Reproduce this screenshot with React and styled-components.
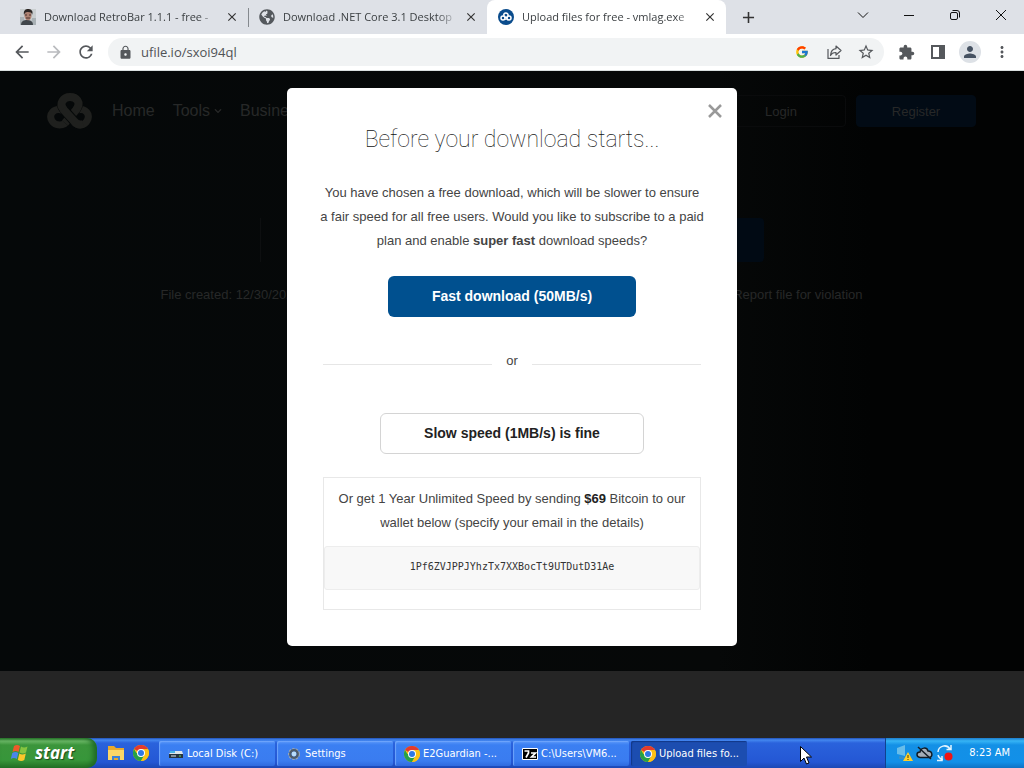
import React from 'react';
import styled, { createGlobalStyle, css } from 'styled-components';
import {
  MdArrowBack, MdArrowForward, MdRefresh, MdLock, MdStarBorder,
  MdExtension, MdPerson, MdMoreVert, MdClose, MdAdd,
} from 'react-icons/md';
import { FcGoogle } from 'react-icons/fc';
import { FaGlobeAmericas, FaChevronDown } from 'react-icons/fa';

const uiFont = '"Open Sans", "Noto Sans", sans-serif';
const pageFont = '"Liberation Sans", Arial, sans-serif';
const taskFont = '"DejaVu Sans Condensed", "DejaVu Sans", sans-serif';

const GlobalStyle = createGlobalStyle`
  *, *::before, *::after { box-sizing: border-box; }
  body { margin: 0; background: #252525; font-family: ${pageFont}; }
  button { border: 0; padding: 0; margin: 0; background: none; font: inherit; color: inherit; }
  p, h1, h2 { margin: 0; }
  svg { display: block; flex: none; }
`;

const Screen = styled.div`
  display: flex;
  flex-direction: column;
  min-height: 100vh;
`;

/* ---------- browser chrome ---------- */

const TabStrip = styled.div`
  display: flex;
  height: 34px;
  padding-left: 9px;
  background: #dee1e7;
  font: 11px/16px ${uiFont};
  color: #3c4043;
`;

const Tab = styled.div`
  display: flex;
  align-items: center;
  flex: 0 1 239px;
  min-width: 0;
  padding: 0 8px 0 11px;
  border-radius: 8px 8px 0 0;
  background: ${(p) => (p.$active ? '#fff' : 'transparent')};
`;

const TabLabel = styled.button`
  display: flex;
  align-items: center;
  gap: 8px;
  flex: 1;
  min-width: 0;
  text-align: left;
`;

const TabTitle = styled.span`
  flex: 1;
  overflow: hidden;
  white-space: nowrap;
  mask-image: linear-gradient(to right, #000 90%, rgba(0, 0, 0, 0.2));
`;

const TabClose = styled.button`
  display: grid;
  place-items: center;
  width: 16px;
  height: 16px;
  margin-left: 9px;
  color: #333;
`;

const TabDivider = styled.span`
  align-self: center;
  width: 1px;
  height: 19px;
  margin-right: -1px;
  background: #85898e;
`;

const NewTab = styled.button`
  display: grid;
  place-items: center;
  width: 28px;
  margin-left: 8px;
  color: #333;
`;

const WindowControls = styled.div`
  display: flex;
  margin-left: auto;
`;

const WindowButton = styled.button`
  display: grid;
  place-items: center;
  width: 46px;
  height: 29px;
`;

const Toolbar = styled.div`
  display: flex;
  align-items: center;
  height: 37px;
  padding: 0 6px;
  background: #fff;
  border-bottom: 1px solid #d9dfdf;
  color: #55585c;
`;

const ToolButton = styled.button`
  display: grid;
  place-items: center;
  flex: none;
  width: 32px;
  height: 28px;
  color: ${(p) => (p.$faded ? '#b9bbbe' : 'inherit')};
`;

const Omnibox = styled.div`
  display: flex;
  align-items: center;
  flex: 1;
  height: 28px;
  margin: 0 6px;
  padding: 0 2px 0 10px;
  border-radius: 14px;
  background: #f1f3f4;
`;

const UrlField = styled.div`
  display: grid;
  flex: 1;
  margin-left: 8px;
`;

const UrlInput = styled.input`
  width: 100%;
  padding: 0;
  border: 0;
  outline: 0;
  background: none;
  font: 13px/20px ${uiFont};
  color: #4f5256;
`;

const Avatar = styled.span`
  display: grid;
  place-items: center;
  width: 22px;
  height: 22px;
  border-radius: 50%;
  background: #dde1e6;
  color: #465262;
`;

/* ---------- web page behind the dialog ---------- */

const Page = styled.div`
  position: relative;
  display: flex;
  flex: 1;
  flex-direction: column;
`;

const Hero = styled.main`
  min-height: 600px;
  padding: 24px 48px 0 47px;
  background: linear-gradient(to right, #050809, #060808 70%, #020303 85%);
  color: #272828;
`;

const SiteHeader = styled.header`
  display: flex;
  align-items: center;
  height: 32px;
`;

const Nav = styled.nav`
  display: flex;
  gap: 18px;
  margin-left: 20px;
  font-size: 16px;
  line-height: 20px;
`;

const NavLink = styled.a`
  display: flex;
  align-items: center;
  gap: 4px;
  color: inherit;
  text-decoration: none;
`;

const Account = styled.div`
  display: flex;
  gap: 10px;
  margin-left: auto;
`;

const AccountButton = styled.button`
  width: ${(p) => (p.$primary ? 120 : 130)}px;
  height: 32px;
  border: 1px solid ${(p) => (p.$primary ? '#020b15' : '#0a0b0c')};
  border-radius: 4px;
  background: ${(p) => (p.$primary ? '#020b15' : 'transparent')};
  font-size: 13px;
`;

const FileCard = styled.section`
  display: flex;
  justify-content: flex-end;
  max-width: 504px;
  height: 44px;
  margin: 91px auto 0;
  border-left: 1px solid #0d0f10;
`;

const FileAction = styled.div`
  width: 120px;
  border-radius: 4px;
  background: #010a14;
`;

const FileMeta = styled.div`
  display: flex;
  justify-content: space-between;
  max-width: 702px;
  margin: 23px auto 0;
  font-size: 13px;
  line-height: 20px;
`;

const MetaLink = styled.a`
  color: inherit;
  text-decoration: none;
`;

const PageEnd = styled.footer`
  flex: 1;
  min-height: 40px;
  background: #252525;
`;

/* ---------- dialog ---------- */

const Overlay = styled.div`
  position: absolute;
  inset: 0;
  display: flex;
  justify-content: center;
  align-items: flex-start;
  padding-top: 17px;
`;

const Dialog = styled.section`
  position: relative;
  display: flex;
  flex-direction: column;
  align-items: center;
  width: 450px;
  padding: 36px;
  border-radius: 5px;
  background: #fff;
  color: #444;
  font-size: 13px;
  line-height: 24px;
  text-align: center;
`;

const DialogClose = styled.button`
  position: absolute;
  top: 14px;
  right: 13px;
  display: grid;
  place-items: center;
  width: 18px;
  height: 18px;
`;

const DialogTitle = styled.h1`
  font: 100 23px/32px Roboto, sans-serif;
  color: #111;
`;

const DialogText = styled.p`
  margin: 25px -12px 0;
  white-space: nowrap;
`;

const choiceStyles = {
  fast: css`
    width: 248px;
    margin-top: 23px;
    background: #00508f;
    color: #fff;
  `,
  slow: css`
    width: 264px;
    margin-top: 40px;
    border: 1px solid #d4d4d4;
    color: #222;
  `,
};

const ChoiceButton = styled.button`
  height: 41px;
  padding-bottom: 2px;
  border-radius: 6px;
  font-size: 14px;
  font-weight: bold;
  ${(p) => choiceStyles[p.$kind]}
`;

const OrDivider = styled.div`
  display: flex;
  align-items: center;
  gap: 14px;
  align-self: stretch;
  margin-top: 32px;

  &::before, &::after {
    content: '';
    flex: 1;
    height: 1px;
    margin-top: 6px;
    background: #e6e6e6;
  }
`;

const BitcoinBox = styled.div`
  align-self: stretch;
  margin-top: 23px;
  padding: 9px 0 19px;
  border: 1px solid #e8e8e8;
`;

const Amount = styled.strong`
  color: #222;
`;

const Wallet = styled.code`
  display: block;
  margin-top: 11px;
  padding: 8px 0 10px;
  border: 1px solid #ededed;
  border-radius: 3px;
  background: #f8f8f8;
  color: #333;
  font: 10px/24px "DejaVu Sans Mono", monospace;
`;

/* ---------- taskbar ---------- */

const Taskbar = styled.footer`
  position: relative;
  display: flex;
  height: 30px;
  background: linear-gradient(#1f4fb4 0, #4488f0 2px, #2a62dc 5px, #2457d4 24px, #1c48b4);
  color: #fff;
  font: 11px/16px ${taskFont};
`;

const StartButton = styled.button`
  display: flex;
  align-items: center;
  gap: 5px;
  width: 97px;
  padding-left: 10px;
  border-radius: 0 10px 10px 0;
  background: linear-gradient(#2e7a2e 0, #6dbb68 3px, #3b953b 7px, #37963a 22px, #247326);
  box-shadow: inset -4px 0 5px #1f6b26;
  font: italic bold 17px/24px "Open Sans", sans-serif;
  text-shadow: 1px 1px 1px #1c4a1c;
`;

const QuickLaunch = styled.div`
  display: flex;
  align-items: center;
  gap: 8px;
  padding: 0 10px;
`;

const IconButton = styled.button`
  display: grid;
  place-items: center;
`;

const TaskList = styled.div`
  display: flex;
  flex: 1;
  gap: 2px;
  min-width: 0;
  padding: 3px 0 2px;
`;

const TaskButton = styled.button`
  display: flex;
  align-items: center;
  gap: 3px;
  flex: 0 1 116px;
  min-width: 0;
  padding-left: 9px;
  border-radius: 2px;
  background: ${(p) => (p.$active ? '#1c4db0' : 'linear-gradient(#5a98fa, #3b7ff2 4px, #3a7cf0 20px, #2f6ade)')};
  box-shadow: inset 1px 1px 1px ${(p) => (p.$active ? '#123888' : '#6fa5fb')};
  white-space: nowrap;
`;

const Tray = styled.div`
  display: flex;
  align-items: center;
  gap: 3px;
  width: 139px;
  padding: 0 14px 0 10px;
  border-left: 1px solid #10428f;
  background: linear-gradient(#1c7ccc 0, #35b4f5 3px, #1390e6 7px, #1290e8 24px, #0f72c4);
`;

const Clock = styled.time`
  margin-left: auto;
`;

const CursorMark = styled.svg`
  position: absolute;
  left: 800px;
  top: 8px;
`;

/* ---------- drawings ---------- */

const Knot = () => (
  <svg width="45" height="36" viewBox="0 0 45 36" fill="none">
    <g stroke="#1f201e" strokeWidth="7">
      <path d="M21 27C17 34 8 33 5 28C1 21 7 15 15 17" />
      <path d="M31 17C38 15 44 21 40 28C37 33 31 33 27 29" />
    </g>
    <path d="M18 30L29 17C35 9 29 4 23 4C17 4 11 10 17 17" stroke="#060909" strokeWidth="9" />
    <path d="M18 30L29 17C35 9 29 4 23 4C17 4 11 10 17 17" stroke="#1f201e" strokeWidth="8" />
    <path d="M19 19L27 28" stroke="#060909" strokeWidth="10" />
    <path d="M16 16L27 28C30 32 33 32 36 31" stroke="#1f201e" strokeWidth="8" />
  </svg>
);

const PortraitIcon = () => (
  <svg width="16" height="16" viewBox="0 0 16 16">
    <rect width="16" height="16" fill="#c9ced0" />
    <path d="M0 8h4l1 8H0zM12 9h4v7h-5z" fill="#a9b1b5" />
    <path d="M1 16c0-4 3-5 6-5s6 1 6 5z" fill="#40464b" />
    <ellipse cx="8" cy="6.500" rx="3.600" ry="4.800" fill="#ad8272" />
    <path d="M4 6C3 1 6 0 8 0s6 1 4 6c0-2-1-3-4-3S5 4 4 6z" fill="#2b2523" />
    <path d="M5 6h2M9 6h2M6 9h4" stroke="#4d322c" />
  </svg>
);

const SiteIcon = () => (
  <svg width="16" height="16" viewBox="0 0 16 16">
    <circle cx="8" cy="8" r="8" fill="#0a4c8c" />
    <g fill="none" stroke="#fff" strokeWidth="1.500">
      <circle cx="5" cy="9" r="2" />
      <circle cx="11" cy="9" r="2" />
      <path d="M6 7C4.500 3 11 3 10 7L7 10.500M6 7l4 4" />
    </g>
  </svg>
);

const ShareIcon = () => (
  <svg width="17" height="16" viewBox="0 0 17 16" fill="none" stroke="currentColor" strokeWidth="1.200" strokeLinejoin="round">
    <path d="M2 5v9.400h11V11" />
    <path d="M10 2l5 4.500-5 4.500V8.500C7 8.300 5.500 9.500 4.500 11.500C4.800 7.500 6.500 5 10 4.700z" />
  </svg>
);

const PanelIcon = () => (
  <svg width="14" height="14" viewBox="0 0 14 14">
    <path d="M0 0h14v14H0zM2 2v10h6V2z" fill="currentColor" fillRule="evenodd" />
  </svg>
);

const WindowIcon = ({ d }) => (
  <svg width="12" height="12" viewBox="0 0 12 12" fill="none" stroke="#111" strokeWidth="1">
    <path d={d} />
  </svg>
);

const ChromeIcon = () => (
  <svg width="16" height="16" viewBox="0 0 16 16">
    <circle cx="8" cy="8" r="8" fill="#fbc116" />
    <path d="M8 8L1.070 4A8 8 0 0 1 14.930 4z" fill="#e33b2e" />
    <path d="M1.070 4A8 8 0 0 0 8 16L11.500 10 8 8H3.400z" fill="#26a148" />
    <path d="M14.930 4A8 8 0 0 1 8 16L11.500 10 8 4z" fill="#fbc116" />
    <circle cx="8" cy="8" r="4" fill="#fff" />
    <circle cx="8" cy="8" r="3" fill="#2f78e5" />
  </svg>
);

const FlagIcon = () => (
  <svg width="20" height="20" viewBox="0 0 20 20">
    <path d="M4 3c2-1.500 4-1.500 6 0L8.500 9c-2-1.300-4-1.300-6 0z" fill="#ef5a2a" />
    <path d="M11 3.500c2 1.300 4 1.300 6.500 0L16 9.500c-2 1.300-4 1.300-6.500 0z" fill="#86c440" />
    <path d="M2.300 10c2-1.300 4-1.300 6 0L6.800 16c-2-1.300-4-1.300-6 0z" fill="#4a86ea" />
    <path d="M9.300 10.500c2 1.300 4 1.300 6.500 0L14.300 17c-2 1.300-4 1.300-6.500 0z" fill="#fcc72b" />
  </svg>
);

const FolderIcon = () => (
  <svg width="18" height="16" viewBox="0 0 18 16">
    <path d="M1 1h6l2 2h8v12H1z" fill="#e9a92c" />
    <path d="M1 5h16v10h-4v-4H5v4H1z" fill="#fbd667" />
    <path d="M5 15v-4h8v4h-2v-2H7v2z" fill="#3c82d8" />
  </svg>
);

const DriveIcon = () => (
  <svg width="16" height="16" viewBox="0 0 16 16">
    <path d="M1 8l2-3h11l1 3z" fill="#dce5ea" />
    <path d="M1 8h14v4H1z" fill="#27333e" />
    <path d="M2 5h5v2H2z" fill="#47b3e8" />
    <path d="M3 9.500h5v1H3z" fill="#dfe9ef" />
    <path d="M11 9.500h2v1h-2z" fill="#61db61" />
  </svg>
);

const GearIcon = () => (
  <svg width="16" height="16" viewBox="0 0 16 16" fill="none">
    <circle cx="8" cy="8" r="5" stroke="#9aa7b4" strokeWidth="2" strokeDasharray="2.500 1" />
    <circle cx="8" cy="8" r="3.700" stroke="#4e5c6b" strokeWidth="2.400" />
    <circle cx="8" cy="8" r="2.400" fill="#b9dcfa" />
  </svg>
);

const SevenZipIcon = () => (
  <svg width="16" height="12" viewBox="0 0 16 12" fill="none">
    <path d="M.5.5h15v11H.5z" fill="#000" stroke="#fff" />
    <path d="M2.500 3h4v2L4 9.500M9 5h4.500L9.500 9H14" stroke="#fff" strokeWidth="1.700" />
  </svg>
);

const NetworkIcon = () => (
  <svg width="17" height="18" viewBox="0 0 17 18">
    <path d="M1 4l8-3v11l-8-2z" fill="#67bdea" />
    <path d="M3 12l5 1v2H3z" fill="#368fc9" />
    <path d="M12 8l5 9H7z" fill="#ffd02b" />
    <path d="M12 11v3M12 15v1" stroke="#4b3a00" />
  </svg>
);

const CloudOffIcon = () => (
  <svg width="17" height="16" viewBox="0 0 17 16" fill="none" stroke="#131d26" strokeWidth="1.500">
    <path d="M4 12.500C0 12 0 7 4 7C5 2 11 2 12 6C17 6 17 12.500 13 12.500z" fill="#a3adb7" />
    <path d="M2 2l13 12" />
  </svg>
);

const SyncIcon = () => (
  <svg width="17" height="18" viewBox="0 0 17 18" fill="none" stroke="#e4f5ff" strokeWidth="1.500">
    <path d="M2 8A6.500 6.500 0 0 1 14 5M15 1v4.500h-4.500M2 11a6.500 6.500 0 0 0 5 4.500M1 16.500h5V12" />
    <circle cx="12.500" cy="12.500" r="4" fill="#ee1414" stroke="none" />
  </svg>
);

const tabs = [
  { title: 'Download RetroBar 1.1.1 - free -', icon: <PortraitIcon />, divider: true },
  { title: 'Download .NET Core 3.1 Desktop', icon: <FaGlobeAmericas size={16} color="#54585d" /> },
  { title: 'Upload files for free - vmlag.exe', icon: <SiteIcon />, active: true },
];

const windowButtons = [
  { label: 'Search tabs', d: 'M1 3.500l5 5 5-5' },
  { label: 'Minimize', d: 'M1 6.500h10' },
  { label: 'Restore', d: 'M3 3.500h4q1.500 0 1.500 1.500v4q0 1.500-1.500 1.500H3q-1.500 0-1.500-1.500V5Q1.500 3.500 3 3.500M3.500 1.500H8q2.500 0 2.500 2.500v4.500' },
  { label: 'Close window', d: 'M1 1l10 10M11 1L1 11' },
];

const tasks = [
  { title: 'Local Disk (C:)', icon: <DriveIcon /> },
  { title: 'Settings', icon: <GearIcon /> },
  { title: 'E2Guardian -...', icon: <ChromeIcon /> },
  { title: 'C:\\Users\\VM6...', icon: <SevenZipIcon /> },
  { title: 'Upload files fo...', icon: <ChromeIcon />, active: true },
];

export default function App() {
  return (
    <Screen>
      <GlobalStyle />
      <TabStrip>
        {tabs.map((t) => (
          <React.Fragment key={t.title}>
            <Tab $active={t.active}>
              <TabLabel>
                {t.icon}
                <TabTitle>{t.title}</TabTitle>
              </TabLabel>
              <TabClose aria-label="Close tab"><MdClose size={14} /></TabClose>
            </Tab>
            {t.divider && <TabDivider />}
          </React.Fragment>
        ))}
        <NewTab aria-label="New tab"><MdAdd size={19} /></NewTab>
        <WindowControls>
          {windowButtons.map((b) => (
            <WindowButton key={b.label} aria-label={b.label}><WindowIcon d={b.d} /></WindowButton>
          ))}
        </WindowControls>
      </TabStrip>

      <Toolbar>
        <ToolButton aria-label="Back"><MdArrowBack size={20} /></ToolButton>
        <ToolButton aria-label="Forward" $faded><MdArrowForward size={20} /></ToolButton>
        <ToolButton aria-label="Reload"><MdRefresh size={20} /></ToolButton>
        <Omnibox>
          <MdLock size={15} />
          <UrlField>
            <UrlInput aria-label="Address" defaultValue="ufile.io/sxoi94ql" />
          </UrlField>
          <ToolButton aria-label="Search with Google"><FcGoogle size={14} /></ToolButton>
          <ToolButton aria-label="Share"><ShareIcon /></ToolButton>
          <ToolButton aria-label="Bookmark"><MdStarBorder size={18} /></ToolButton>
        </Omnibox>
        <ToolButton aria-label="Extensions"><MdExtension size={17} /></ToolButton>
        <ToolButton aria-label="Side panel"><PanelIcon /></ToolButton>
        <ToolButton aria-label="Profile"><Avatar><MdPerson size={18} /></Avatar></ToolButton>
        <ToolButton aria-label="Menu"><MdMoreVert size={18} /></ToolButton>
      </Toolbar>

      <Page>
        <Hero>
          <SiteHeader>
            <Knot />
            <Nav>
              <NavLink href="#home">Home</NavLink>
              <NavLink href="#tools">Tools <FaChevronDown size={8} /></NavLink>
              <NavLink href="#business">Business</NavLink>
            </Nav>
            <Account>
              <AccountButton>Login</AccountButton>
              <AccountButton $primary>Register</AccountButton>
            </Account>
          </SiteHeader>
          <FileCard><FileAction /></FileCard>
          <FileMeta>
            <span>File created: 12/30/2022</span>
            <MetaLink href="#report">Report file for violation</MetaLink>
          </FileMeta>
        </Hero>
        <PageEnd />

        <Overlay>
          <Dialog role="dialog" aria-labelledby="dialog-title">
            <DialogClose aria-label="Close">
              <svg width="14" height="14" viewBox="0 0 14 14" stroke="#999" strokeWidth="2.500">
                <path d="M1 1l12 12M13 1L1 13" />
              </svg>
            </DialogClose>
            <DialogTitle id="dialog-title">Before your download starts...</DialogTitle>
            <DialogText>
              You have chosen a free download, which will be slower to ensure<br />
              a fair speed for all free users. Would you like to subscribe to a paid<br />
              plan and enable <strong>super fast</strong> download speeds?
            </DialogText>
            <ChoiceButton $kind="fast">Fast download (50MB/s)</ChoiceButton>
            <OrDivider>or</OrDivider>
            <ChoiceButton $kind="slow">Slow speed (1MB/s) is fine</ChoiceButton>
            <BitcoinBox>
              <p>
                Or get 1 Year Unlimited Speed by sending <Amount>$69</Amount> Bitcoin to our<br />
                wallet below (specify your email in the details)
              </p>
              <Wallet>1Pf6ZVJPPJYhzTx7XXBocTt9UTDutD31Ae</Wallet>
            </BitcoinBox>
          </Dialog>
        </Overlay>
      </Page>

      <Taskbar>
        <StartButton><FlagIcon />start</StartButton>
        <QuickLaunch>
          <IconButton aria-label="File Explorer"><FolderIcon /></IconButton>
          <IconButton aria-label="Chrome"><ChromeIcon /></IconButton>
        </QuickLaunch>
        <TaskList>
          {tasks.map((t) => (
            <TaskButton key={t.title} $active={t.active}>{t.icon}{t.title}</TaskButton>
          ))}
        </TaskList>
        <Tray>
          <NetworkIcon />
          <CloudOffIcon />
          <SyncIcon />
          <Clock>8:23 AM</Clock>
        </Tray>
        <CursorMark width="12" height="19" viewBox="0 0 12 19">
          <path d="M.5.5v15l3.500-3.500 2.500 6 2.500-1-2.500-6h5z" fill="#fff" stroke="#000" />
        </CursorMark>
      </Taskbar>
    </Screen>
  );
}
